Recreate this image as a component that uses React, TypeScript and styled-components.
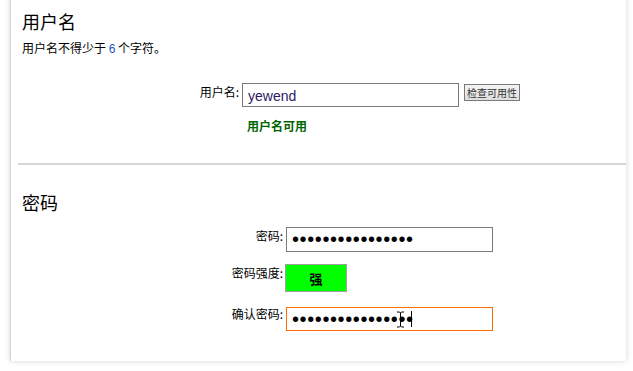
import React from 'react';
import styled, { createGlobalStyle } from 'styled-components';

const GlobalStyle = createGlobalStyle`
  html, body {
    margin: 0;
    padding: 0;
    background: #ffffff;
  }
  body {
    font-family: "Liberation Sans", "Noto Sans CJK SC", sans-serif;
    font-size: 12px;
    color: #000;
  }
`;

const Page = styled.div`
  width: 633px;
  height: 371px;
  overflow: hidden;
`;

const Panel = styled.div`
  margin: -10px 0 0 10px;
  width: 616px;
  height: 371px;
  box-sizing: border-box;
  background: #fff;
  border-left: 1px solid #d4d4d4;
  box-shadow: 0 0 6px rgba(0, 0, 0, 0.16);
  padding-top: 19px;
`;

const Section = styled.div<{ $bottom: number }>`
  padding: 0 0 ${p => p.$bottom}px 11px;
`;

const Heading = styled.h2<{ $mt?: number }>`
  margin: ${p => p.$mt || 0}px 0 0;
  font-family: "Noto Sans CJK SC", sans-serif;
  font-weight: normal;
  font-size: 18px;
  line-height: 24px;
`;

const Note = styled.p`
  margin: 7px 0 0;
  font-family: "Noto Sans CJK SC", sans-serif;
  font-size: 12px;
  line-height: 16px;
`;

const Num = styled.span`
  font-family: "Liberation Sans", sans-serif;
  color: #1f4fbf;
`;

const Divider = styled.hr`
  margin: 0 0 0 7px;
  border: none;
  border-top: 2px solid #d6d6d6;
  height: 0;
`;

const Form = styled.div<{ $left: number; $label: number; $top: number }>`
  display: grid;
  grid-template-columns: ${p => p.$label}px auto;
  column-gap: 3px;
  align-items: start;
  margin: ${p => p.$top}px 0 0 ${p => p.$left}px;
`;

const Label = styled.label<{ $mt?: number }>`
  text-align: right;
  font-family: "Noto Sans CJK SC", sans-serif;
  font-size: 12px;
  line-height: 16px;
  padding-top: 1px;
  margin-top: ${p => p.$mt || 0}px;
  white-space: nowrap;
`;

const Field = styled.div<{ $mt?: number }>`
  display: flex;
  align-items: flex-start;
  gap: 5px;
  position: relative;
  margin-top: ${p => p.$mt || 0}px;
`;

const TextInput = styled.input<{ $w: number; $h: number; $focus?: boolean }>`
  box-sizing: border-box;
  width: ${p => p.$w}px;
  height: ${p => p.$h}px;
  margin: 0;
  padding: 2px 5px 0;
  border: 1px solid ${p => (p.$focus ? '#ff6a00' : '#7a7a7a')};
  outline: none;
  background: #fff;
  font-family: "Liberation Sans", sans-serif;
  font-size: 14px;
  color: #2b1a60;
  &[type='password'] {
    font-size: 20px;
    letter-spacing: 0.6px;
    color: #000;
    padding-top: 0;
  }
`;

const CheckButton = styled.button`
  margin-top: 1px;
  height: 17px;
  padding: 0 2px;
  border: 1px solid #7a7a7a;
  background: linear-gradient(#f4f4f4, #dedede);
  font-family: "Noto Sans CJK SC", sans-serif;
  font-size: 10px;
  line-height: 13px;
  color: #333;
`;

const Status = styled.div`
  grid-column: 2;
  margin-top: 11px;
  padding-left: 5px;
  font-family: "Noto Sans CJK SC", sans-serif;
  font-size: 12px;
  font-weight: bold;
  line-height: 16px;
  color: #006400;
`;

const Strength = styled.div`
  box-sizing: border-box;
  width: 62px;
  height: 28px;
  margin-left: -1px;
  border: 1px solid #a0a0a0;
  background: #00ff00;
  display: flex;
  align-items: center;
  justify-content: center;
  font-family: "Noto Sans CJK SC", sans-serif;
  font-weight: bold;
  font-size: 13px;
`;

const Caret = styled.span`
  position: absolute;
  left: 125px;
  top: 4px;
  width: 1px;
  height: 16px;
  background: #000;
`;

const Pointer = styled.svg`
  position: absolute;
  left: 110px;
  top: 4px;
`;

export default function App() {
  return (
    <Page>
      <GlobalStyle />
      <Panel>
        <Section $bottom={29}>
          <Heading>用户名</Heading>
          <Note>
            用户名不得少于 <Num>6</Num> 个字符。
          </Note>
          <Form $left={158} $label={59} $top={26}>
            <Label>用户名:</Label>
            <Field>
              <TextInput $w={217} $h={24} defaultValue="yewend" />
              <CheckButton>检查可用性</CheckButton>
            </Field>
            <Status>用户名可用</Status>
          </Form>
        </Section>
        <Divider />
        <Section $bottom={0}>
          <Heading $mt={25}>密码</Heading>
          <Form $left={178} $label={83} $top={13}>
            <Label>密码:</Label>
            <Field>
              <TextInput $w={207} $h={25} type="password" defaultValue="0123456789abcdef" />
            </Field>
            <Label $mt={12}>密码强度:</Label>
            <Field $mt={12}>
              <Strength>强</Strength>
            </Field>
            <Label $mt={13}>确认密码:</Label>
            <Field $mt={15}>
              <TextInput $w={207} $h={24} $focus type="password" defaultValue="0123456789abcdef" />
              <Caret />
              <Pointer width="9" height="17" viewBox="0 0 9 17">
                <path d="M1 1h2.5l1 1 1-1H8M4.5 2v13M1 16h2.5l1-1 1 1H8" stroke="#000" strokeWidth="1" fill="none" />
              </Pointer>
            </Field>
          </Form>
        </Section>
      </Panel>
    </Page>
  );
}
